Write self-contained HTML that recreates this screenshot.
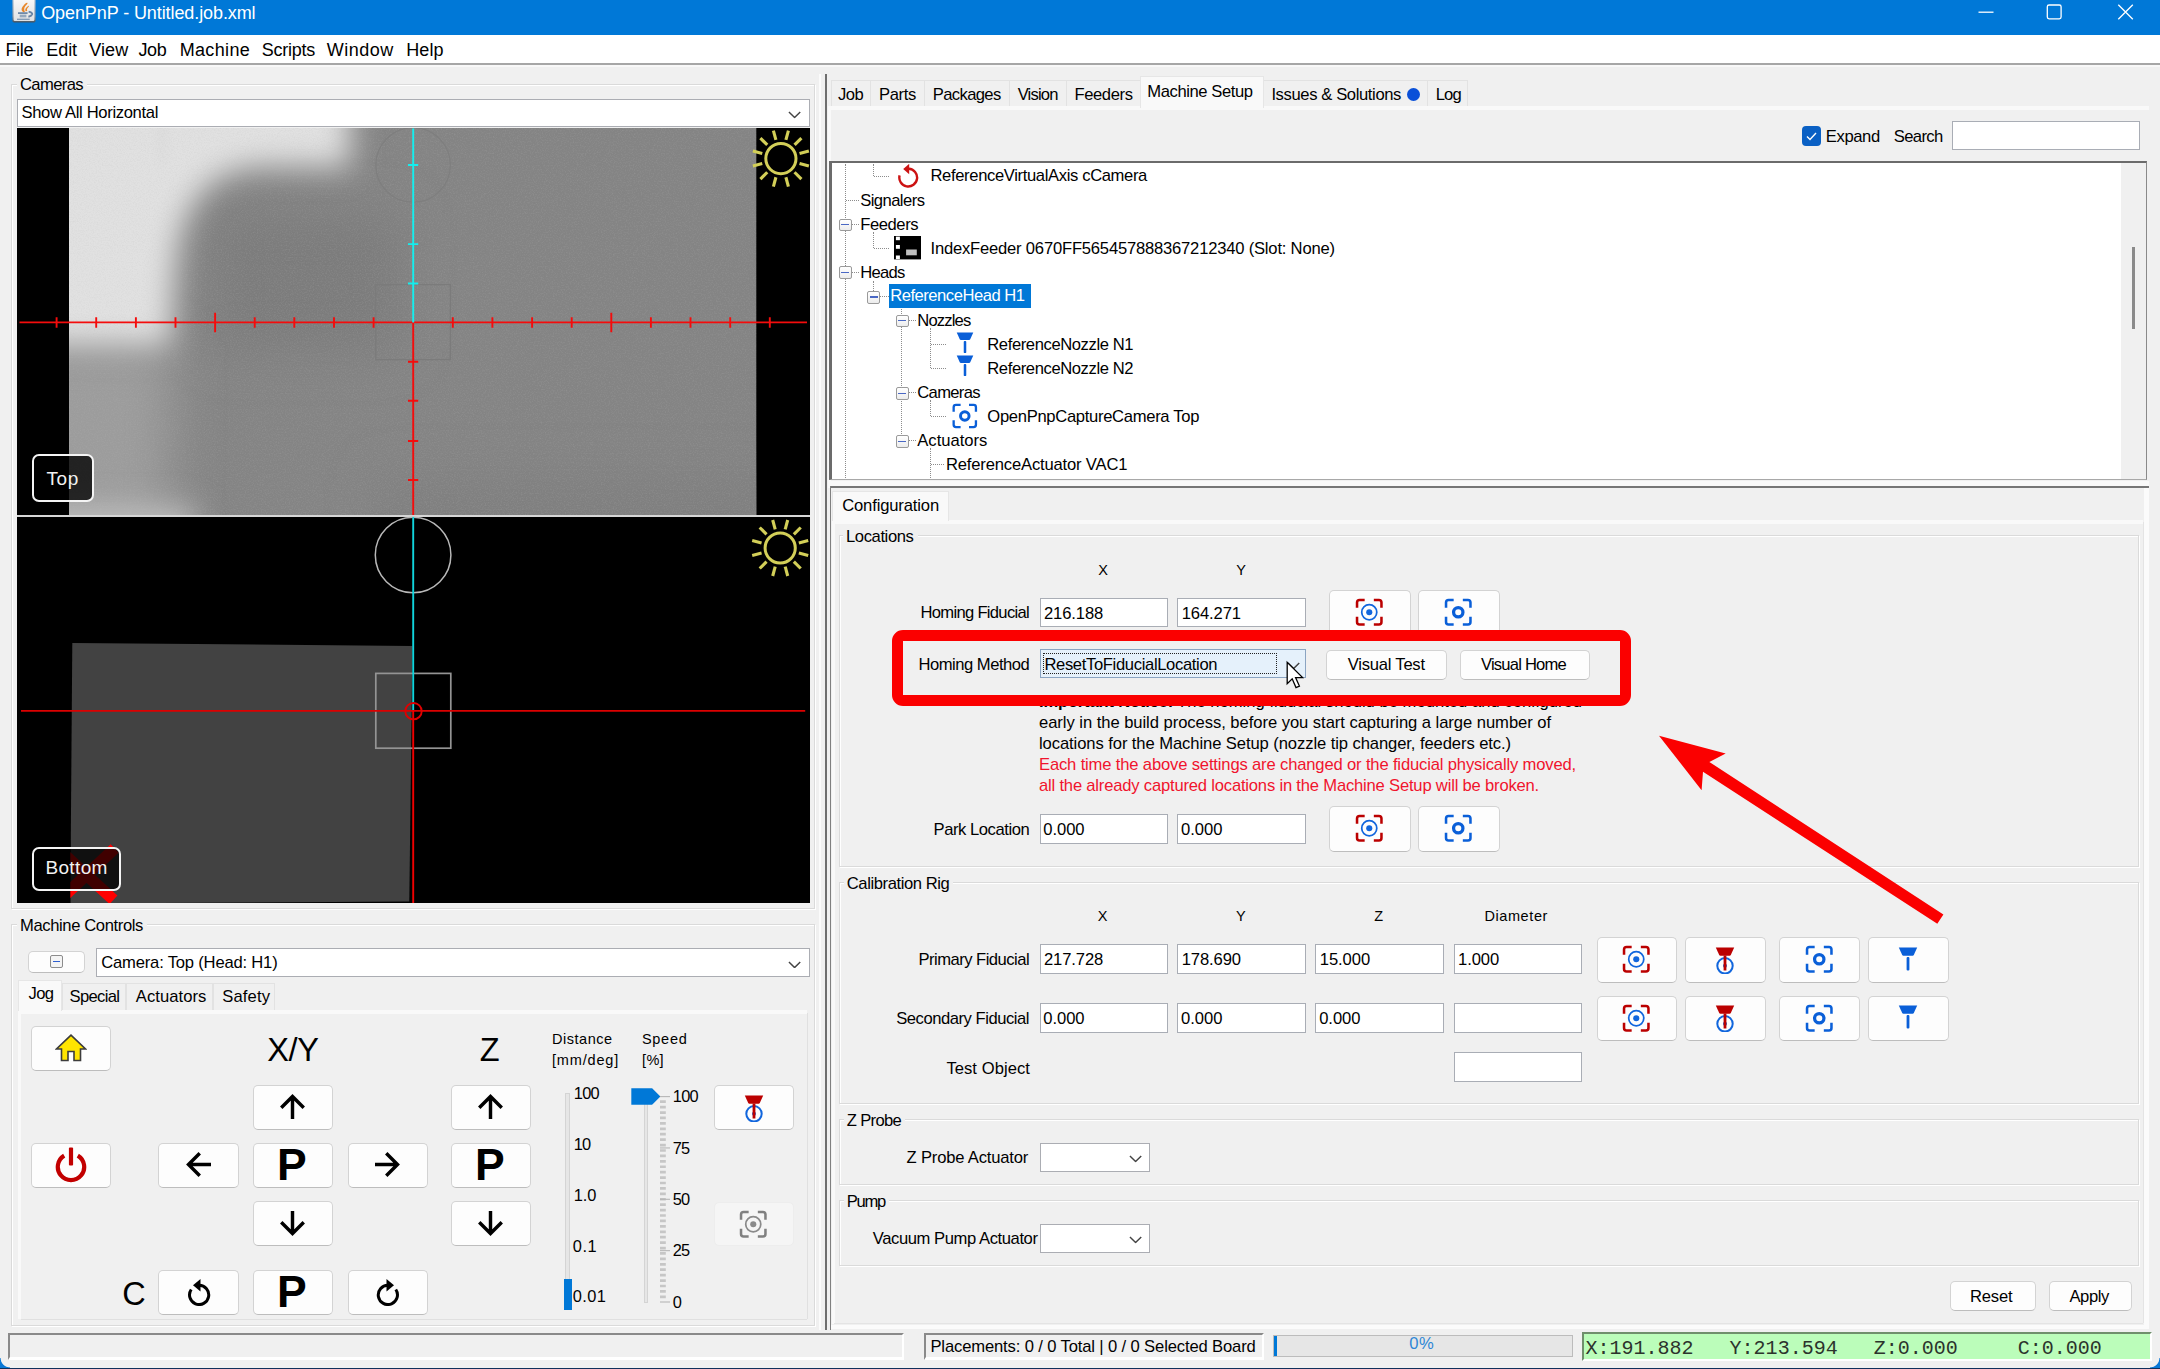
<!DOCTYPE html>
<html lang="en"><head><meta charset="utf-8"><title>OpenPnP - Untitled.job.xml</title>
<style>
html,body{margin:0;padding:0}
body{width:2160px;height:1369px;overflow:hidden;background:#f0f0f0;font-family:"Liberation Sans",sans-serif;font-size:16px;color:#000;position:relative}
div,span.t,svg{position:absolute;box-sizing:border-box}
section{position:absolute;left:0;top:0;width:0;height:0}
.t{white-space:pre}
.btn{background:#fdfdfd;border:1px solid #d3d3d3;border-bottom-color:#bdbdbd;border-radius:5px}
.fld{background:#fff;border:1.6px solid #a9adb5}
.cmb{background:#fff;border:1.5px solid #abadb3}
.grp{border:1px solid #dadada;box-shadow:inset 1px 1px 0 #fff,1px 1px 0 #fff}
.lbl{background:#f0f0f0}
.tab{border:1px solid #e2e2e2;border-bottom:none;background:#f0f0f0}
.tabsel{border:1px solid #e6e6e6;border-bottom:none;background:#f9f9f9}
.pane{background:#f0f0f0;border-top:4px solid #f9f9f9;border-left:3px solid #f9f9f9}
.xb{background:linear-gradient(#fff,#ececec);border:1.3px solid #9a9a9a;border-radius:2px}
.xb:after{content:"";position:absolute;left:1.6px;right:1.6px;top:4.2px;height:1.6px;background:#4a68c4}
.dotv{border-left:1.5px dotted #8c8c8c;width:0}
.doth{border-top:1.5px dotted #8c8c8c;height:0}
</style></head>
<body>

<svg style="width:0;height:0;left:0;top:0" aria-hidden="true"><defs>
<symbol id="i-capr" viewBox="0 0 28 28"><path d="M2 9.5V4.5Q2 2 4.5 2H9.5M18.5 2H23.5Q26 2 26 4.5V9.5M26 18.5V23.5Q26 26 23.5 26H18.5M9.5 26H4.5Q2 26 2 23.5V18.5" fill="none" stroke="#bb0000" stroke-width="2.5"/><circle cx="14" cy="14" r="7.4" fill="none" stroke="#1166dd" stroke-width="1.7"/><circle cx="14" cy="14" r="3" fill="#1166dd"/></symbol>
<symbol id="i-capb" viewBox="0 0 28 28"><path d="M2 9.5V4.5Q2 2 4.5 2H9.5M18.5 2H23.5Q26 2 26 4.5V9.5M26 18.5V23.5Q26 26 23.5 26H18.5M9.5 26H4.5Q2 26 2 23.5V18.5" fill="none" stroke="#0a5fd8" stroke-width="2.5"/><circle cx="14" cy="14" r="4.6" fill="none" stroke="#0a5fd8" stroke-width="3.2"/></symbol>
<symbol id="i-capg" viewBox="0 0 28 28"><path d="M2 9.5V4.5Q2 2 4.5 2H9.5M18.5 2H23.5Q26 2 26 4.5V9.5M26 18.5V23.5Q26 26 23.5 26H18.5M9.5 26H4.5Q2 26 2 23.5V18.5" fill="none" stroke="#808080" stroke-width="2.5"/><circle cx="14" cy="14" r="7.4" fill="none" stroke="#8a8a8a" stroke-width="1.7"/><circle cx="14" cy="14" r="3" fill="#8a8a8a"/></symbol>
<symbol id="i-nozr" viewBox="0 0 20 27"><path d="M0.8 0.5H19.2L15.8 8Q15.4 8.8 14.6 8.8H5.4Q4.6 8.8 4.2 8Z" fill="#bb0000"/><circle cx="10" cy="18.8" r="7.7" fill="none" stroke="#1166dd" stroke-width="2"/><circle cx="10" cy="18.8" r="2" fill="#1166dd"/><rect x="8.6" y="8.5" width="2.8" height="15" fill="#bb0000"/></symbol>
<symbol id="i-nozb" viewBox="0 0 20 27"><path d="M0.8 0.5H19.2L15.8 8Q15.4 8.8 14.6 8.8H5.4Q4.6 8.8 4.2 8Z" fill="#0a5fd8"/><rect x="8.6" y="10" width="2.8" height="13.4" rx="1" fill="#0a5fd8"/></symbol>
<symbol id="i-up" viewBox="0 0 24 24"><path d="M12 24V2.6M1.2 13.2L12 2.4L22.8 13.2" fill="none" stroke="#000" stroke-width="3.3"/></symbol>
<symbol id="i-ccw" viewBox="0 0 26 28"><path d="M5.2 11.5A9.6 9.6 0 1 0 13 7.3" fill="none" stroke="#000" stroke-width="3"/><path d="M14.5 1L7 7.3L14.5 13.6Z" fill="#000"/></symbol>
<symbol id="i-pow" viewBox="0 0 32 36"><path d="M9.2 8.6A13.2 13.2 0 1 0 22.8 8.6" fill="none" stroke="#c20000" stroke-width="4.2"/><rect x="13.9" y="0.5" width="4.2" height="18" rx="1" fill="#c20000"/></symbol>
<symbol id="i-home" viewBox="0 0 32 28"><path d="M16 1.2L1.5 15H6.5V26.5H13V17.5H19V26.5H25.5V15H30.5Z" fill="#ffe500" stroke="#3c3c3c" stroke-width="1.6" stroke-linejoin="miter"/></symbol>
<symbol id="i-sun" viewBox="-32 -32 64 64" overflow="visible"><circle r="15.1" fill="none" stroke="#d3cf58" stroke-width="3"/><g stroke="#d3cf58" stroke-width="3.1"><path d="M0 -19.3V-29" transform="rotate(15)"/><path d="M0 -19.3V-29" transform="rotate(45)"/><path d="M0 -19.3V-29" transform="rotate(75)"/><path d="M0 -19.3V-29" transform="rotate(105)"/><path d="M0 -19.3V-29" transform="rotate(135)"/><path d="M0 -19.3V-29" transform="rotate(165)"/><path d="M0 -19.3V-29" transform="rotate(195)"/><path d="M0 -19.3V-29" transform="rotate(225)"/><path d="M0 -19.3V-29" transform="rotate(255)"/><path d="M0 -19.3V-29" transform="rotate(285)"/><path d="M0 -19.3V-29" transform="rotate(315)"/><path d="M0 -19.3V-29" transform="rotate(345)"/></g></symbol>
<symbol id="i-chev" viewBox="0 0 14 8"><path d="M1 1L7 7L13 1" fill="none" stroke="#444" stroke-width="1.5"/></symbol>
</defs></svg>

<section id="window-chrome">
<div style="left:0px;top:0px;width:2160px;height:35px;background:#0078d7"></div>
<svg style="left:12px;top:0;width:24px;height:24px" viewBox="0 0 24 24"><defs><linearGradient id="jg" x1="0" y1="0" x2="0" y2="1"><stop offset="0" stop-color="#fafafa"/><stop offset="1" stop-color="#dfe1e3"/></linearGradient><linearGradient id="jb" x1="0" y1="0" x2="0" y2="1"><stop offset="0" stop-color="#b4c4d4"/><stop offset="0.75" stop-color="#8a98a6"/><stop offset="1" stop-color="#44525e"/></linearGradient></defs><rect x="0.4" y="-3" width="23.2" height="25.6" rx="1.8" fill="url(#jb)"/><rect x="1.6" y="-3" width="20.8" height="24" rx="1.2" fill="url(#jg)"/><path d="M11.4 12.2C7.6 9.4 10.6 6.2 13.4 3.4C14.8 2.3 16.2 2.7 15.2 4C12.8 6.4 11.2 8.6 13 11.9Z" fill="#e8872a"/><path d="M13.7 11.2C12.5 8.9 14.4 7.5 16.2 6C17 5.5 17.3 6.2 16.5 7C15 8.3 14.5 9.5 15.3 10.9Z" fill="#e8872a"/><path d="M6 13.1H15.6" stroke="#6884a4" stroke-width="1.7" fill="none"/><path d="M7.7 15.3H14.4M7.7 16.8H14.4" stroke="#7a94b0" stroke-width="1.1" fill="none"/><path d="M5 19.3H17.7" stroke="#7f98b4" stroke-width="1.3" fill="none"/><path d="M16.6 11.6Q20.6 12.6 20.2 14.2Q19.6 16 16.4 16.7" stroke="#6884a4" stroke-width="1.9" fill="none"/></svg>
<span class="t" style="left:41.20px;top:2.20px;line-height:22px;font-size:18px;letter-spacing:-0.095px;color:#fff;">OpenPnP - Untitled.job.xml</span>
<svg style="left:1970px;top:0;width:180px;height:34px" viewBox="1970 0 180 34" fill="none" stroke="#fff" stroke-width="1.3"><path d="M1978.5 12.2H1993.5"/><rect x="2047.3" y="5" width="13.8" height="13.8" rx="1.8"/><path d="M2118.3 4.8L2132.8 19.3M2132.8 4.8L2118.3 19.3"/></svg>
<div style="left:0px;top:35px;width:2160px;height:29px;background:#fff"></div>
<div style="left:0px;top:63.4px;width:2160px;height:1.8px;background:#a6a6a6"></div>
<div style="left:0px;top:65.2px;width:2160px;height:1.8px;background:#f8f8f8"></div>
<span class="t" style="left:5.40px;top:38.80px;line-height:22px;font-size:18px;letter-spacing:-0.279px;">File</span>
<span class="t" style="left:46.20px;top:38.80px;line-height:22px;font-size:18px;letter-spacing:-0.033px;">Edit</span>
<span class="t" style="left:89.20px;top:38.80px;line-height:22px;font-size:18px;letter-spacing:0.099px;">View</span>
<span class="t" style="left:138.40px;top:38.80px;line-height:22px;font-size:18px;letter-spacing:-0.377px;">Job</span>
<span class="t" style="left:179.70px;top:38.80px;line-height:22px;font-size:18px;letter-spacing:0.336px;">Machine</span>
<span class="t" style="left:261.70px;top:38.80px;line-height:22px;font-size:18px;letter-spacing:-0.231px;">Scripts</span>
<span class="t" style="left:326.70px;top:38.80px;line-height:22px;font-size:18px;letter-spacing:0.511px;">Window</span>
<span class="t" style="left:406.20px;top:38.80px;line-height:22px;font-size:18px;letter-spacing:0.142px;">Help</span>
</section>
<section id="cameras-panel">
<div class="grp" style="left:11px;top:84px;width:804px;height:825px;"></div>
<div class="lbl" style="left:17px;top:77px;width:70px;height:18px;"></div>
<span class="t" style="left:20.00px;top:74.00px;line-height:21px;font-size:16.6px;letter-spacing:-0.618px;">Cameras</span>
<div class="cmb" style="left:17px;top:98.5px;width:793px;height:28.5px;"></div>
<span class="t" style="left:21.50px;top:101.60px;line-height:21px;font-size:16.6px;letter-spacing:-0.340px;">Show All Horizontal</span>
<svg style="left:788.4px;top:111.2px;width:13.2px;height:7.6px;"><use href="#i-chev"/></svg>
<svg style="left:17px;top:128px;width:793px;height:775px" viewBox="17 128 793 775"><defs><filter id="bl12" filterUnits="userSpaceOnUse" x="-100" y="0" width="1000" height="700"><feGaussianBlur stdDeviation="15"/></filter><filter id="bl25" filterUnits="userSpaceOnUse" x="-100" y="0" width="1000" height="700"><feGaussianBlur stdDeviation="24"/></filter><filter id="bl6" filterUnits="userSpaceOnUse" x="-100" y="0" width="1000" height="700"><feGaussianBlur stdDeviation="6"/></filter><filter id="nz" filterUnits="userSpaceOnUse" x="69" y="128" width="688" height="387"><feTurbulence type="fractalNoise" baseFrequency="0.75" numOctaves="2" seed="7" result="n"/><feColorMatrix in="n" type="matrix" values="0 0 0 0 0.5  0 0 0 0 0.5  0 0 0 0 0.5  1.2 0 0 0 -0.5"/></filter><clipPath id="ctop"><rect x="69" y="128" width="687.3" height="387"/></clipPath></defs><rect x="17" y="128" width="793" height="775" fill="#000"/><g clip-path="url(#ctop)"><rect x="69" y="128" width="688" height="387" fill="#848484"/><path d="M380 480H800V580H380Z" fill="#7f7f7f" filter="url(#bl25)"/><path d="M215 215H400V350H215Z" fill="#7c7c7c" filter="url(#bl25)"/><path d="M10 345H172L168 560H10Z" fill="#9c9c9c" filter="url(#bl25)"/><path d="M20 508H195V560H20Z" fill="#c0c0c0" filter="url(#bl12)"/><path d="M20 70H350V167H262Q186 170 176 262L170 346H20Z" fill="#e1e1e1" filter="url(#bl12)"/><path d="M158 120H165V165H160Z" fill="#dadada" filter="url(#bl6)"/><rect x="69" y="128" width="688" height="387" fill="#808080" filter="url(#nz)" opacity="0.35"/></g><circle cx="413.1" cy="165" r="37.3" fill="none" stroke="#7e7e7e" stroke-width="1.1"/><rect x="375.8" y="284.6" width="74.6" height="75" fill="none" stroke="#7b7b7b" stroke-width="1.2"/><path d="M19.5 322.4H807 M413.2 322.4V515 M373.6 317.3V327.7 M452.8 317.3V327.7 M334.0 317.3V327.7 M492.4 317.3V327.7 M294.3 317.3V327.7 M532.1 317.3V327.7 M254.7 317.3V327.7 M571.7 317.3V327.7 M215.1 312.8V332.2 M611.3 312.8V332.2 M175.5 317.3V327.7 M650.9 317.3V327.7 M135.9 317.3V327.7 M690.5 317.3V327.7 M96.2 317.3V327.7 M730.2 317.3V327.7 M56.6 317.3V327.7 M769.8 317.3V327.7 M408 361.8H418.2 M408 400.7H418.2 M408 441H418.2 M408 480H418.2" stroke="#f40c0c" stroke-width="1.9" fill="none"/><path d="M413.2 128.6V322.4 M408 165H418.2 M408 244.1H418.2 M408 283.5H418.2" stroke="#14eeee" stroke-width="1.9" fill="none"/><rect x="17" y="515" width="793" height="2" fill="#d6d6d6"/><path d="M72.3 643L412.4 646L409.3 901.6L70.3 903.5Z" fill="#424242"/><path d="M64 896L114.6 848.5M64 854.2L113.5 899.8" stroke="#ff0000" stroke-width="11.6" fill="none"/><rect x="60" y="840" width="10.3" height="64" fill="#000"/><circle cx="413.1" cy="555" r="37.8" fill="none" stroke="#b8b8b8" stroke-width="1.5"/><rect x="375.8" y="673.4" width="75" height="74.8" fill="none" stroke="#949494" stroke-width="1.7"/><path d="M413.2 517V710.6" stroke="#10d4dc" stroke-width="1.9" fill="none"/><path d="M21 710.9H805.2" stroke="#dc0000" stroke-width="1.9" fill="none"/><path d="M413.2 710.6V903.5" stroke="#f00000" stroke-width="1.9" fill="none"/><circle cx="413.5" cy="711.2" r="8.2" fill="none" stroke="#e00000" stroke-width="1.9"/><use href="#i-sun" x="748.9" y="126.6" width="64" height="64"/><use href="#i-sun" x="748.2" y="516" width="64" height="64"/></svg>
<div style="left:31.7px;top:453.6px;width:62.8px;height:48.2px;background:rgba(0,0,0,.78);border:2px solid #f4f4f4;border-radius:7px"></div>
<span class="t" style="left:46.60px;top:466.80px;line-height:24px;font-size:19px;letter-spacing:0.520px;color:#f2f2f2;">Top</span>
<div style="left:31.6px;top:846.5px;width:89.9px;height:44.1px;background:rgba(0,0,0,.75);border:2px solid #f4f4f4;border-radius:7px"></div>
<span class="t" style="left:45.40px;top:856.10px;line-height:24px;font-size:19px;letter-spacing:0.366px;color:#f2f2f2;">Bottom</span>
</section>
<section id="machine-controls">
<div class="grp" style="left:11px;top:924px;width:804px;height:402px;"></div>
<div class="lbl" style="left:17px;top:917.5px;width:130px;height:18px;"></div>
<span class="t" style="left:20.00px;top:914.50px;line-height:21px;font-size:16.6px;letter-spacing:-0.383px;">Machine Controls</span>
<div class="btn" style="left:27.5px;top:951.3px;width:57.2px;height:21.4px;"></div>
<div style="left:50px;top:955px;width:13px;height:13px;border:1px solid #8c8c8c;border-radius:2px;background:#f4f4f4"></div>
<div style="left:53px;top:960.6px;width:7px;height:1.8px;background:#2f5fd0"></div>
<div class="cmb" style="left:96.3px;top:947.5px;width:713.6px;height:29.3px;"></div>
<span class="t" style="left:101.30px;top:952.20px;line-height:21px;font-size:16.6px;letter-spacing:-0.194px;">Camera: Top (Head: H1)</span>
<svg style="left:788.4px;top:960.6px;width:13.2px;height:7.6px;"><use href="#i-chev"/></svg>
<div class="tab" style="left:62px;top:983px;width:64.4px;height:27px;"></div>
<div class="tab" style="left:126.3px;top:983px;width:87.2px;height:27px;"></div>
<div class="tab" style="left:213.4px;top:983px;width:61.8px;height:27px;"></div>
<div class="pane" style="left:18px;top:1010px;width:788.5px;height:309px;"></div>
<div class="tabsel" style="left:18px;top:980px;width:44.4px;height:31px;"></div>
<span class="t" style="left:28.60px;top:983.30px;line-height:21px;font-size:16.6px;letter-spacing:-0.722px;">Jog</span>
<span class="t" style="left:69.60px;top:985.80px;line-height:21px;font-size:16.6px;letter-spacing:-0.691px;">Special</span>
<span class="t" style="left:135.80px;top:985.80px;line-height:21px;font-size:16.6px;letter-spacing:0.055px;">Actuators</span>
<span class="t" style="left:222.20px;top:985.80px;line-height:21px;font-size:16.6px;letter-spacing:0.159px;">Safety</span>
<div style="left:806.5px;top:1013px;width:1px;height:306px;background:#e0e0e0"></div>
<div style="left:21px;top:1318.5px;width:786px;height:1px;background:#e0e0e0"></div>
<div class="btn" style="left:30.7px;top:1026.3px;width:80.7px;height:45px;"></div>
<svg style="left:55.05px;top:1033.8px;width:32px;height:28px;"><use href="#i-home"/></svg>
<div class="btn" style="left:30.7px;top:1143px;width:80.7px;height:45px;"></div>
<svg style="left:55.05px;top:1146.8px;width:32px;height:36px;"><use href="#i-pow"/></svg>
<span class="t" style="left:267.20px;top:1030.30px;line-height:41px;font-size:32.5px;letter-spacing:-0.264px;">X/Y</span>
<span class="t" style="left:479.80px;top:1030.30px;line-height:41px;font-size:32.5px;letter-spacing:0.141px;">Z</span>
<div class="btn" style="left:252.7px;top:1084.6px;width:80.7px;height:45px;"></div>
<svg style="left:279.95px;top:1093.8999999999999px;width:25px;height:25px;transform:rotate(0deg)"><use href="#i-up"/></svg>
<div class="btn" style="left:158.4px;top:1143px;width:80.7px;height:45px;"></div>
<svg style="left:185.65px;top:1152.3px;width:25px;height:25px;transform:rotate(-90deg)"><use href="#i-up"/></svg>
<div class="btn" style="left:252.7px;top:1143px;width:80.7px;height:45px;"></div>
<span class="t" style="left:276.95px;top:1137.00px;line-height:56px;font-size:44.5px;font-weight:bold;">P</span>
<div class="btn" style="left:347.6px;top:1143px;width:80.7px;height:45px;"></div>
<svg style="left:374.85px;top:1152.3px;width:25px;height:25px;transform:rotate(90deg)"><use href="#i-up"/></svg>
<div class="btn" style="left:252.7px;top:1201.4px;width:80.7px;height:45px;"></div>
<svg style="left:279.95px;top:1210.7px;width:25px;height:25px;transform:rotate(180deg)"><use href="#i-up"/></svg>
<div class="btn" style="left:450.8px;top:1084.6px;width:80.7px;height:45px;"></div>
<svg style="left:478.05px;top:1093.8999999999999px;width:25px;height:25px;transform:rotate(0deg)"><use href="#i-up"/></svg>
<div class="btn" style="left:450.8px;top:1143px;width:80.7px;height:45px;"></div>
<span class="t" style="left:475.05px;top:1137.00px;line-height:56px;font-size:44.5px;font-weight:bold;">P</span>
<div class="btn" style="left:450.8px;top:1201.4px;width:80.7px;height:45px;"></div>
<svg style="left:478.05px;top:1210.7px;width:25px;height:25px;transform:rotate(180deg)"><use href="#i-up"/></svg>
<span class="t" style="left:122.30px;top:1273.80px;line-height:41px;font-size:32.5px;letter-spacing:0.516px;">C</span>
<div class="btn" style="left:158.4px;top:1269.5px;width:80.7px;height:45px;"></div>
<svg style="left:185.75px;top:1278.0px;width:26px;height:28px;"><use href="#i-ccw"/></svg>
<div class="btn" style="left:252.7px;top:1269.5px;width:80.7px;height:45px;"></div>
<span class="t" style="left:276.95px;top:1263.50px;line-height:56px;font-size:44.5px;font-weight:bold;">P</span>
<div class="btn" style="left:347.6px;top:1269.5px;width:80.7px;height:45px;"></div>
<svg style="left:374.95000000000005px;top:1278.0px;width:26px;height:28px;transform:scaleX(-1);"><use href="#i-ccw"/></svg>
<div class="btn" style="left:713.6px;top:1084.6px;width:80.7px;height:45px;"></div>
<svg style="left:743.6500000000001px;top:1094.5px;width:20px;height:27px;"><use href="#i-nozr"/></svg>
<div style="left:713.6px;top:1201.8px;width:80.7px;height:44.5px;background:#f5f5f5;border:1px solid #ededed;border-radius:5px"></div>
<svg style="left:738.6px;top:1209.6px;width:28.5px;height:28.5px;"><use href="#i-capg"/></svg>
<span class="t" style="left:552.00px;top:1029.50px;line-height:18px;font-size:14.5px;letter-spacing:0.522px;">Distance</span>
<span class="t" style="left:552.00px;top:1051.00px;line-height:18px;font-size:14.5px;letter-spacing:0.820px;">[mm/deg]</span>
<span class="t" style="left:642.00px;top:1029.50px;line-height:18px;font-size:14.5px;letter-spacing:0.692px;">Speed</span>
<span class="t" style="left:642.00px;top:1051.00px;line-height:18px;font-size:14.5px;letter-spacing:0.349px;">[%]</span>
<div style="left:565.4px;top:1092.9px;width:4.2px;height:187px;background:#e6e6e6;border:1px solid #d4d4d4;border-bottom:none"></div>
<div style="left:564.3px;top:1279.2px;width:7.3px;height:31px;background:#0078d7"></div>
<span class="t" style="left:573.80px;top:1082.70px;line-height:20px;font-size:16.4px;letter-spacing:-0.720px;">100</span>
<span class="t" style="left:573.80px;top:1134.00px;line-height:20px;font-size:16.4px;letter-spacing:-0.817px;">10</span>
<span class="t" style="left:573.80px;top:1185.20px;line-height:20px;font-size:16.4px;letter-spacing:-0.132px;">1.0</span>
<span class="t" style="left:572.80px;top:1236.30px;line-height:20px;font-size:16.4px;letter-spacing:0.534px;">0.1</span>
<span class="t" style="left:572.80px;top:1285.80px;line-height:20px;font-size:16.4px;letter-spacing:0.373px;">0.01</span>
<div style="left:643.7px;top:1100px;width:4.2px;height:203px;background:#e6e6e6;border:1px solid #d4d4d4"></div>
<svg style="left:631px;top:1088px;width:31px;height:18px" viewBox="631 1088 31 18"><path d="M631.3 1088.2H652.1L660.4 1096.5L652.1 1104.8H631.3Z" fill="#0078d7"/></svg>
<svg style="left:655px;top:1090px;width:20px;height:220px" viewBox="655 1090 20 220"><path d="M660 1101.70H665.8 M660 1107.12H665.8 M660 1112.54H665.8 M660 1117.96H665.8 M660 1123.38H665.8 M660 1128.80H665.8 M660 1134.22H665.8 M660 1139.64H665.8 M660 1145.06H665.8 M660 1150.48H665.8 M660 1155.90H665.8 M660 1161.32H665.8 M660 1166.74H665.8 M660 1172.16H665.8 M660 1177.58H665.8 M660 1183.00H665.8 M660 1188.42H665.8 M660 1193.84H665.8 M660 1199.26H665.8 M660 1204.68H665.8 M660 1210.10H665.8 M660 1215.52H665.8 M660 1220.94H665.8 M660 1226.36H665.8 M660 1231.78H665.8 M660 1237.20H665.8 M660 1242.62H665.8 M660 1248.04H665.8 M660 1253.46H665.8 M660 1258.88H665.8 M660 1264.30H665.8 M660 1269.72H665.8 M660 1275.14H665.8 M660 1280.56H665.8 M660 1285.98H665.8 M660 1291.40H665.8 M660 1296.82H665.8" stroke="#c6c6c6" stroke-width="2.7"/><path d="M660 1096.60H670" stroke="#b6b6b6" stroke-width="1.1"/><path d="M660 1147.95H670" stroke="#b6b6b6" stroke-width="1.1"/><path d="M660 1199.30H670" stroke="#b6b6b6" stroke-width="1.1"/><path d="M660 1250.65H670" stroke="#b6b6b6" stroke-width="1.1"/><path d="M660 1302.00H670" stroke="#b6b6b6" stroke-width="1.1"/></svg>
<span class="t" style="left:672.70px;top:1085.70px;line-height:20px;font-size:16.4px;letter-spacing:-0.653px;">100</span>
<span class="t" style="left:672.70px;top:1138.20px;line-height:20px;font-size:16.4px;letter-spacing:-0.717px;">75</span>
<span class="t" style="left:672.70px;top:1189.30px;line-height:20px;font-size:16.4px;letter-spacing:-0.717px;">50</span>
<span class="t" style="left:672.70px;top:1240.40px;line-height:20px;font-size:16.4px;letter-spacing:-0.717px;">25</span>
<span class="t" style="left:672.70px;top:1291.60px;line-height:20px;font-size:16.4px;letter-spacing:-0.725px;">0</span>
</section>
<section id="splitter">
<div style="left:819px;top:74px;width:1.7px;height:1256px;background:#fbfbfb"></div>
<div style="left:825px;top:74px;width:1.6px;height:1256px;background:#6e6e6e"></div>
</section>
<section id="main-tabs">
<div class="tab" style="left:830.7px;top:79.7px;width:40.59999999999991px;height:27px;"></div>
<span class="t" style="left:838.00px;top:83.60px;line-height:21px;font-size:16.6px;letter-spacing:-0.455px;">Job</span>
<div class="tab" style="left:870.3px;top:79.7px;width:55.0px;height:27px;"></div>
<span class="t" style="left:879.00px;top:83.60px;line-height:21px;font-size:16.6px;letter-spacing:-0.347px;">Parts</span>
<div class="tab" style="left:924.3px;top:79.7px;width:85.70000000000005px;height:27px;"></div>
<span class="t" style="left:932.80px;top:83.60px;line-height:21px;font-size:16.6px;letter-spacing:-0.634px;">Packages</span>
<div class="tab" style="left:1009px;top:79.7px;width:57.59999999999991px;height:27px;"></div>
<span class="t" style="left:1017.70px;top:83.60px;line-height:21px;font-size:16.6px;letter-spacing:-0.834px;">Vision</span>
<div class="tab" style="left:1065.6px;top:79.7px;width:75.20000000000005px;height:27px;"></div>
<span class="t" style="left:1074.40px;top:83.60px;line-height:21px;font-size:16.6px;letter-spacing:-0.382px;">Feeders</span>
<div class="tab" style="left:1263.3px;top:79.7px;width:164.70000000000005px;height:27px;"></div>
<span class="t" style="left:1271.40px;top:83.60px;line-height:21px;font-size:16.6px;letter-spacing:-0.384px;">Issues &amp; Solutions</span>
<div class="tab" style="left:1427px;top:79.7px;width:40.5px;height:27px;"></div>
<span class="t" style="left:1435.70px;top:83.60px;line-height:21px;font-size:16.6px;letter-spacing:-0.796px;">Log</span>
<div class="pane" style="left:827.6px;top:106.3px;width:1321px;height:382px;"></div>
<div class="tabsel" style="left:1139.8px;top:76.2px;width:124px;height:31.5px;"></div>
<span class="t" style="left:1147.30px;top:80.70px;line-height:21px;font-size:16.6px;letter-spacing:-0.416px;">Machine Setup</span>
<div style="left:1407.1px;top:87.5px;width:13px;height:13px;background:#0a50d8;border-radius:50%"></div>
<div style="left:1801.7px;top:126px;width:19px;height:20px;background:#0a60c4;border-radius:4px"></div>
<svg style="left:1801.7px;top:126px;width:19px;height:20px" viewBox="0 0 19 20"><path d="M5 10.5L8 13.5L14 7" fill="none" stroke="#fff" stroke-width="1.4"/></svg>
<span class="t" style="left:1825.80px;top:125.60px;line-height:21px;font-size:16.6px;letter-spacing:-0.380px;">Expand</span>
<span class="t" style="left:1893.70px;top:125.60px;line-height:21px;font-size:16.6px;letter-spacing:-0.596px;">Search</span>
<div class="fld" style="left:1952px;top:120.8px;width:188px;height:29.2px;"></div>
</section>
<section id="machine-setup-tree">
<div style="left:828.5px;top:160.8px;width:1318.5px;height:319.6px;background:#fff;border-top:2.2px solid #6b6b6b;border-left:3.2px solid #6b6b6b;border-right:1.4px solid #8a8a8a;border-bottom:1.6px solid #a8a8a8"></div>
<div style="left:2121px;top:163px;width:24.6px;height:315.6px;background:#f0f0f0"></div>
<div style="left:2131.6px;top:246.5px;width:3px;height:82.2px;background:#8a8a8a"></div>
<div class="dotv" style="left:844.7px;top:164px;width:0px;height:314px;"></div>
<div class="dotv" style="left:872.7px;top:164px;width:0px;height:12px;"></div>
<div class="doth" style="left:873.5px;top:176px;width:15px;height:0px;"></div>
<div class="doth" style="left:846px;top:200px;width:13px;height:0px;"></div>
<div class="doth" style="left:851px;top:224px;width:8px;height:0px;"></div>
<div class="dotv" style="left:872.7px;top:232px;width:0px;height:16px;"></div>
<div class="doth" style="left:873.5px;top:248px;width:15px;height:0px;"></div>
<div class="doth" style="left:851px;top:272px;width:8px;height:0px;"></div>
<div class="dotv" style="left:872.7px;top:281px;width:0px;height:10px;"></div>
<div class="doth" style="left:880px;top:296px;width:9px;height:0px;"></div>
<div class="dotv" style="left:901.4px;top:304px;width:0px;height:136px;"></div>
<div class="doth" style="left:908px;top:320px;width:8px;height:0px;"></div>
<div class="doth" style="left:908px;top:392px;width:8px;height:0px;"></div>
<div class="doth" style="left:908px;top:440px;width:8px;height:0px;"></div>
<div class="dotv" style="left:930.2px;top:328px;width:0px;height:40px;"></div>
<div class="doth" style="left:931px;top:344px;width:15px;height:0px;"></div>
<div class="doth" style="left:931px;top:368px;width:15px;height:0px;"></div>
<div class="dotv" style="left:930.2px;top:400px;width:0px;height:16px;"></div>
<div class="doth" style="left:931px;top:416px;width:15px;height:0px;"></div>
<div class="dotv" style="left:930.2px;top:448px;width:0px;height:30px;"></div>
<div class="doth" style="left:931px;top:464px;width:13px;height:0px;"></div>
<div class="xb" style="left:838.8px;top:218.6px;width:13px;height:12.6px;"></div>
<div class="xb" style="left:838.8px;top:266.4px;width:13px;height:12.6px;"></div>
<div class="xb" style="left:867.0999999999999px;top:291px;width:13px;height:12.6px;"></div>
<div class="xb" style="left:895.8px;top:314.6px;width:13px;height:12.6px;"></div>
<div class="xb" style="left:895.8px;top:387.4px;width:13px;height:12.6px;"></div>
<div class="xb" style="left:895.8px;top:435.4px;width:13px;height:12.6px;"></div>
<svg style="left:897px;top:164px;width:23px;height:24px" viewBox="0 0 23 24"><path d="M11.8 4.7A8.9 8.9 0 1 1 2.6 11.4" fill="none" stroke="#cc1212" stroke-width="2.4"/><path d="M12.2 -0.2L6.2 5L12.2 10.2Z" fill="#cc1212"/></svg>
<span class="t" style="left:930.50px;top:165.40px;line-height:21px;font-size:16.6px;letter-spacing:-0.360px;">ReferenceVirtualAxis cCamera</span>
<span class="t" style="left:860.20px;top:190.20px;line-height:21px;font-size:16.6px;letter-spacing:-0.554px;">Signalers</span>
<span class="t" style="left:860.20px;top:213.60px;line-height:21px;font-size:16.6px;letter-spacing:-0.411px;">Feeders</span>
<svg style="left:894px;top:236.3px;width:27px;height:23.4px" viewBox="0 0 27 23.4"><rect width="27" height="23.4" fill="#000"/><rect x="1.9" y="0.6" width="4" height="3.6" fill="#fff"/><rect x="1.9" y="9" width="4" height="3.8" fill="#fff"/><rect x="1.9" y="19.5" width="4" height="3.6" fill="#fff"/><rect x="12.1" y="13.5" width="10.7" height="5.8" fill="#c0c0c0"/></svg>
<span class="t" style="left:930.50px;top:237.80px;line-height:21px;font-size:16.6px;letter-spacing:-0.203px;">IndexFeeder 0670FF565457888367212340 (Slot: None)</span>
<span class="t" style="left:860.20px;top:261.60px;line-height:21px;font-size:16.6px;letter-spacing:-0.694px;">Heads</span>
<div style="left:889.3px;top:284.3px;width:141.3px;height:23.8px;background:#0078d7"></div>
<span class="t" style="left:890.20px;top:285.30px;line-height:21px;font-size:16.6px;letter-spacing:-0.479px;color:#fff;">ReferenceHead H1</span>
<span class="t" style="left:917.30px;top:309.60px;line-height:21px;font-size:16.6px;letter-spacing:-0.833px;">Nozzles</span>
<svg style="left:955.5px;top:331.6px;width:18px;height:24.3px;"><use href="#i-nozb"/></svg>
<span class="t" style="left:987.30px;top:334.00px;line-height:21px;font-size:16.6px;letter-spacing:-0.406px;">ReferenceNozzle N1</span>
<svg style="left:955.5px;top:355.4px;width:18px;height:24.3px;"><use href="#i-nozb"/></svg>
<span class="t" style="left:987.30px;top:357.80px;line-height:21px;font-size:16.6px;letter-spacing:-0.406px;">ReferenceNozzle N2</span>
<span class="t" style="left:917.30px;top:381.60px;line-height:21px;font-size:16.6px;letter-spacing:-0.690px;">Cameras</span>
<svg style="left:950.6px;top:403px;width:27.6px;height:26px;"><use href="#i-capb"/></svg>
<span class="t" style="left:987.30px;top:406.00px;line-height:21px;font-size:16.6px;letter-spacing:-0.310px;">OpenPnpCaptureCamera Top</span>
<span class="t" style="left:917.30px;top:429.60px;line-height:21px;font-size:16.6px;letter-spacing:-0.012px;">Actuators</span>
<span class="t" style="left:946.00px;top:454.00px;line-height:21px;font-size:16.6px;letter-spacing:-0.172px;">ReferenceActuator VAC1</span>
</section>
<section id="configuration-panel">
<div style="left:831px;top:480.8px;width:1317.6px;height:5.4px;background:#f9f9f9"></div>
<div style="left:829.8px;top:486px;width:1319px;height:1.8px;background:#767676"></div>
<div style="left:829.8px;top:486px;width:1.5px;height:844px;background:#808080"></div>
<div style="left:2144px;top:488px;width:4.6px;height:841.4px;background:#fbfbfb"></div>
<div style="left:831.4px;top:1324.6px;width:1317px;height:4.6px;background:#fbfbfb"></div>
<div class="pane" style="left:832px;top:520px;width:1311px;height:803.5px;"></div>
<div style="left:2142.6px;top:522px;width:1px;height:801px;background:#e4e4e4"></div>
<div style="left:834px;top:1322.6px;width:1309px;height:1px;background:#e4e4e4"></div>
<div class="tabsel" style="left:832px;top:490.5px;width:116.6px;height:30.5px;"></div>
<span class="t" style="left:842.20px;top:494.50px;line-height:21px;font-size:16.6px;letter-spacing:-0.148px;">Configuration</span>
<div class="grp" style="left:838.6px;top:535.2px;width:1300px;height:332px;"></div>
<div class="lbl" style="left:843px;top:528.8px;width:74.5px;height:18px;"></div>
<span class="t" style="left:846.00px;top:525.80px;line-height:21px;font-size:16.6px;letter-spacing:-0.394px;">Locations</span>
<div class="grp" style="left:838.6px;top:881.6px;width:1300px;height:222.4px;"></div>
<div class="lbl" style="left:843.8px;top:876px;width:109.6px;height:18px;"></div>
<span class="t" style="left:846.80px;top:873.00px;line-height:21px;font-size:16.6px;letter-spacing:-0.416px;">Calibration Rig</span>
<div class="grp" style="left:838.6px;top:1119px;width:1300px;height:66px;"></div>
<div class="lbl" style="left:843.8px;top:1112.8px;width:61.2px;height:18px;"></div>
<span class="t" style="left:846.80px;top:1109.80px;line-height:21px;font-size:16.6px;letter-spacing:-0.690px;">Z Probe</span>
<div class="grp" style="left:838.6px;top:1200px;width:1300px;height:66.4px;"></div>
<div class="lbl" style="left:843.8px;top:1193.5px;width:45.2px;height:18px;"></div>
<span class="t" style="left:846.80px;top:1190.50px;line-height:21px;font-size:16.6px;letter-spacing:-1.290px;">Pump</span>
<span class="t" style="left:1098.20px;top:560.60px;line-height:18px;font-size:14.5px;letter-spacing:-0.072px;">X</span>
<span class="t" style="left:1236.20px;top:560.60px;line-height:18px;font-size:14.5px;letter-spacing:-0.072px;">Y</span>
<span class="t" style="left:920.50px;top:602.00px;line-height:21px;font-size:16.6px;letter-spacing:-0.698px;">Homing Fiducial</span>
<div class="fld" style="left:1039.5px;top:597.6px;width:128.6px;height:29.8px;"></div>
<span class="t" style="left:1043.90px;top:602.60px;line-height:21px;font-size:16.6px;letter-spacing:-0.098px;">216.188</span>
<div class="fld" style="left:1177.3px;top:597.6px;width:128.6px;height:29.8px;"></div>
<span class="t" style="left:1181.70px;top:602.60px;line-height:21px;font-size:16.6px;letter-spacing:-0.098px;">164.271</span>
<div class="btn" style="left:1329.4px;top:590px;width:81.8px;height:46px;"></div>
<svg style="left:1355.2500000000002px;top:598.05px;width:28.5px;height:28.5px;"><use href="#i-capr"/></svg>
<div class="btn" style="left:1418px;top:590px;width:81.6px;height:46px;"></div>
<svg style="left:1443.75px;top:598.05px;width:28.5px;height:28.5px;"><use href="#i-capb"/></svg>
<span class="t" style="left:918.50px;top:654.00px;line-height:21px;font-size:16.6px;letter-spacing:-0.488px;">Homing Method</span>
<div style="left:1039.8px;top:649.2px;width:266.4px;height:29.2px;background:#e5f1fb;border:1px solid #8aa4c2"></div>
<div style="left:1043.4px;top:653px;width:233.4px;height:21.4px;border:1px dotted #222"></div>
<span class="t" style="left:1044.40px;top:654.00px;line-height:21px;font-size:16.6px;letter-spacing:-0.348px;">ResetToFiducialLocation</span>
<svg style="left:1287px;top:661.6px;width:13.2px;height:7.6px;"><use href="#i-chev"/></svg>
<div class="btn" style="left:1326.4px;top:649.6px;width:120.8px;height:30.4px;"></div>
<span class="t" style="left:1347.80px;top:654.00px;line-height:21px;font-size:16.6px;letter-spacing:-0.240px;">Visual Test</span>
<div class="btn" style="left:1459.8px;top:649.6px;width:129.8px;height:30.4px;"></div>
<span class="t" style="left:1481.00px;top:654.00px;line-height:21px;font-size:16.6px;letter-spacing:-0.798px;">Visual Home</span>
<span class="t" style="left:1039.00px;top:690.60px;line-height:21px;font-size:16.6px;letter-spacing:-0.199px;font-weight:bold;">Important Notice:</span>
<span class="t" style="left:1177.00px;top:690.60px;line-height:21px;font-size:16.6px;letter-spacing:0.018px;">The homing fiducial should be mounted and configured</span>
<span class="t" style="left:1039.00px;top:711.60px;line-height:21px;font-size:16.6px;letter-spacing:-0.050px;">early in the build process, before you start capturing a large number of</span>
<span class="t" style="left:1039.00px;top:732.80px;line-height:21px;font-size:16.6px;letter-spacing:-0.088px;">locations for the Machine Setup (nozzle tip changer, feeders etc.)</span>
<span class="t" style="left:1039.00px;top:754.00px;line-height:21px;font-size:16.6px;letter-spacing:-0.160px;color:#f0142d;">Each time the above settings are changed or the fiducial physically moved,</span>
<span class="t" style="left:1039.00px;top:774.60px;line-height:21px;font-size:16.6px;letter-spacing:-0.194px;color:#f0142d;">all the already captured locations in the Machine Setup will be broken.</span>
<span class="t" style="left:933.60px;top:818.60px;line-height:21px;font-size:16.6px;letter-spacing:-0.451px;">Park Location</span>
<div class="fld" style="left:1039.5px;top:814.2px;width:128.6px;height:29.8px;"></div>
<span class="t" style="left:1043.30px;top:819.20px;line-height:21px;font-size:16.6px;letter-spacing:-0.066px;">0.000</span>
<div class="fld" style="left:1177.3px;top:814.2px;width:128.6px;height:29.8px;"></div>
<span class="t" style="left:1181.10px;top:819.20px;line-height:21px;font-size:16.6px;letter-spacing:-0.066px;">0.000</span>
<div class="btn" style="left:1329.4px;top:806.4px;width:81.8px;height:46px;"></div>
<svg style="left:1355.2500000000002px;top:814.4499999999999px;width:28.5px;height:28.5px;"><use href="#i-capr"/></svg>
<div class="btn" style="left:1418px;top:806.4px;width:81.6px;height:46px;"></div>
<svg style="left:1443.75px;top:814.4499999999999px;width:28.5px;height:28.5px;"><use href="#i-capb"/></svg>
<span class="t" style="left:1097.80px;top:907.40px;line-height:18px;font-size:14.5px;letter-spacing:-0.072px;">X</span>
<span class="t" style="left:1236.00px;top:907.40px;line-height:18px;font-size:14.5px;letter-spacing:-0.072px;">Y</span>
<span class="t" style="left:1374.20px;top:907.40px;line-height:18px;font-size:14.5px;letter-spacing:0.341px;">Z</span>
<span class="t" style="left:1484.40px;top:907.40px;line-height:18px;font-size:14.5px;letter-spacing:0.596px;">Diameter</span>
<span class="t" style="left:918.50px;top:949.20px;line-height:21px;font-size:16.6px;letter-spacing:-0.522px;">Primary Fiducial</span>
<div class="fld" style="left:1039.5px;top:944.2px;width:128.6px;height:29.8px;"></div>
<span class="t" style="left:1043.90px;top:949.20px;line-height:21px;font-size:16.6px;letter-spacing:-0.098px;">217.728</span>
<div class="fld" style="left:1177.3px;top:944.2px;width:128.6px;height:29.8px;"></div>
<span class="t" style="left:1181.70px;top:949.20px;line-height:21px;font-size:16.6px;letter-spacing:-0.098px;">178.690</span>
<div class="fld" style="left:1315.4px;top:944.2px;width:128.6px;height:29.8px;"></div>
<span class="t" style="left:1319.80px;top:949.20px;line-height:21px;font-size:16.6px;letter-spacing:-0.086px;">15.000</span>
<div class="fld" style="left:1453.6px;top:944.2px;width:128.6px;height:29.8px;"></div>
<span class="t" style="left:1458.00px;top:949.20px;line-height:21px;font-size:16.6px;letter-spacing:-0.066px;">1.000</span>
<span class="t" style="left:896.20px;top:1007.60px;line-height:21px;font-size:16.6px;letter-spacing:-0.462px;">Secondary Fiducial</span>
<div class="fld" style="left:1039.5px;top:1002.8000000000001px;width:128.6px;height:29.8px;"></div>
<span class="t" style="left:1043.30px;top:1007.80px;line-height:21px;font-size:16.6px;letter-spacing:-0.066px;">0.000</span>
<div class="fld" style="left:1177.3px;top:1002.8000000000001px;width:128.6px;height:29.8px;"></div>
<span class="t" style="left:1181.10px;top:1007.80px;line-height:21px;font-size:16.6px;letter-spacing:-0.066px;">0.000</span>
<div class="fld" style="left:1315.4px;top:1002.8000000000001px;width:128.6px;height:29.8px;"></div>
<span class="t" style="left:1319.20px;top:1007.80px;line-height:21px;font-size:16.6px;letter-spacing:-0.066px;">0.000</span>
<div class="fld" style="left:1453.6px;top:1002.8000000000001px;width:128.6px;height:29.8px;"></div>
<span class="t" style="left:946.40px;top:1057.80px;line-height:21px;font-size:16.6px;letter-spacing:0.053px;">Test Object</span>
<div class="fld" style="left:1453.6px;top:1052.3999999999999px;width:128.6px;height:29.8px;"></div>
<div class="btn" style="left:1596.6px;top:937.2px;width:80.9px;height:45.6px;"></div>
<svg style="left:1622.35px;top:945.15px;width:28.5px;height:28.5px;"><use href="#i-capr"/></svg>
<div class="btn" style="left:1685.2px;top:937.2px;width:80.9px;height:45.6px;"></div>
<svg style="left:1715.0500000000002px;top:946.65px;width:20px;height:27px;"><use href="#i-nozr"/></svg>
<div class="btn" style="left:1779.3px;top:937.2px;width:80.9px;height:45.6px;"></div>
<svg style="left:1805.05px;top:945.15px;width:28.5px;height:28.5px;"><use href="#i-capb"/></svg>
<div class="btn" style="left:1868.3px;top:937.2px;width:80.9px;height:45.6px;"></div>
<svg style="left:1898.15px;top:946.65px;width:20px;height:27px;"><use href="#i-nozb"/></svg>
<div class="btn" style="left:1596.6px;top:995.9px;width:80.9px;height:45.6px;"></div>
<svg style="left:1622.35px;top:1003.8499999999999px;width:28.5px;height:28.5px;"><use href="#i-capr"/></svg>
<div class="btn" style="left:1685.2px;top:995.9px;width:80.9px;height:45.6px;"></div>
<svg style="left:1715.0500000000002px;top:1005.3499999999999px;width:20px;height:27px;"><use href="#i-nozr"/></svg>
<div class="btn" style="left:1779.3px;top:995.9px;width:80.9px;height:45.6px;"></div>
<svg style="left:1805.05px;top:1003.8499999999999px;width:28.5px;height:28.5px;"><use href="#i-capb"/></svg>
<div class="btn" style="left:1868.3px;top:995.9px;width:80.9px;height:45.6px;"></div>
<svg style="left:1898.15px;top:1005.3499999999999px;width:20px;height:27px;"><use href="#i-nozb"/></svg>
<span class="t" style="left:906.60px;top:1147.00px;line-height:21px;font-size:16.6px;letter-spacing:-0.183px;">Z Probe Actuator</span>
<div class="cmb" style="left:1039.8px;top:1143.2px;width:110.4px;height:28.6px;"></div>
<svg style="left:1128.6px;top:1155.4px;width:13.2px;height:7.6px;"><use href="#i-chev"/></svg>
<span class="t" style="left:872.80px;top:1228.00px;line-height:21px;font-size:16.6px;letter-spacing:-0.420px;">Vacuum Pump Actuator</span>
<div class="cmb" style="left:1039.8px;top:1224.2px;width:110.4px;height:28.6px;"></div>
<svg style="left:1128.6px;top:1236.4px;width:13.2px;height:7.6px;"><use href="#i-chev"/></svg>
<div class="btn" style="left:1949.6px;top:1281.2px;width:86.6px;height:30px;"></div>
<span class="t" style="left:1970.00px;top:1285.80px;line-height:21px;font-size:16.6px;letter-spacing:-0.172px;">Reset</span>
<div class="btn" style="left:2049px;top:1281.2px;width:83px;height:30px;"></div>
<span class="t" style="left:2069.40px;top:1285.80px;line-height:21px;font-size:16.6px;letter-spacing:-0.383px;">Apply</span>
</section>
<section id="status-bar">
<div style="left:7.8px;top:1333.2px;width:896px;height:27.2px;border-top:2.6px solid #8a8a8a;border-left:2.6px solid #8a8a8a;border-right:2.6px solid #fff;border-bottom:3px solid #fff;"></div>
<div style="left:923.8px;top:1333.2px;width:340px;height:27.2px;border-top:2.6px solid #8a8a8a;border-left:2.6px solid #8a8a8a;border-right:2.6px solid #fff;border-bottom:3px solid #fff;"></div>
<span class="t" style="left:930.40px;top:1335.50px;line-height:21px;font-size:16.6px;letter-spacing:-0.134px;">Placements: 0 / 0 Total | 0 / 0 Selected Board</span>
<div style="left:1273.4px;top:1335.2px;width:300px;height:21.6px;background:#e6e6e6;border:1px solid #bcbcbc"></div>
<div style="left:1273.6px;top:1336.2px;width:3px;height:19.6px;background:#0078d7"></div>
<span class="t" style="left:1409.30px;top:1333.20px;line-height:21px;font-size:16.6px;letter-spacing:0.508px;color:#2f86d6;">0%</span>
<div style="left:1582.4px;top:1331.6px;width:569.6px;height:29.6px;background:#bbfdba;border-top:2.8px solid #6f8f6c;border-left:2.8px solid #6f8f6c;border-right:2.6px solid #fff;border-bottom:2.8px solid #fff"></div>
<span class="t" style="left:1585.60px;top:1335.90px;line-height:25px;font-size:20px;color:#2c332c;font-family:'Liberation Mono', monospace;">X:191.882   Y:213.594   Z:0.000     C:0.000</span>
<div style="left:0px;top:1367.6px;width:2160px;height:2px;background:#10305c"></div>
<div style="left:0px;top:1358px;width:10px;height:10px;background:radial-gradient(circle at 100% 0,rgba(240,240,240,0) 9px,#0a78d6 9.8px)"></div>
<div style="left:2150px;top:1358px;width:10px;height:10px;background:radial-gradient(circle at 0 0,rgba(240,240,240,0) 9px,#0a78d6 9.8px)"></div>
</section>
<section id="annotations">
<div style="left:892.2px;top:630px;width:739px;height:76.4px;border:11.4px solid #fb0000;border-radius:11px"></div>
<svg style="left:1650px;top:728px;width:300px;height:204px" viewBox="1650 728 300 204"><path d="M1659 735.7L1725.7 753.4L1709.4 762.1L1943.4 914.5L1937.3 923.8L1703 771.8L1701.6 790.2Z" fill="#fb0000"/></svg>
<svg style="left:1285px;top:660px;width:24px;height:32px" viewBox="0 0 24 32"><path d="M2.2 2.2V23.6L7.2 18.8L11 27.6L14.4 26.1L10.6 17.6H17.6Z" fill="#fff" stroke="#000" stroke-width="1.3" stroke-linejoin="miter"/></svg>
</section>
</body></html>
